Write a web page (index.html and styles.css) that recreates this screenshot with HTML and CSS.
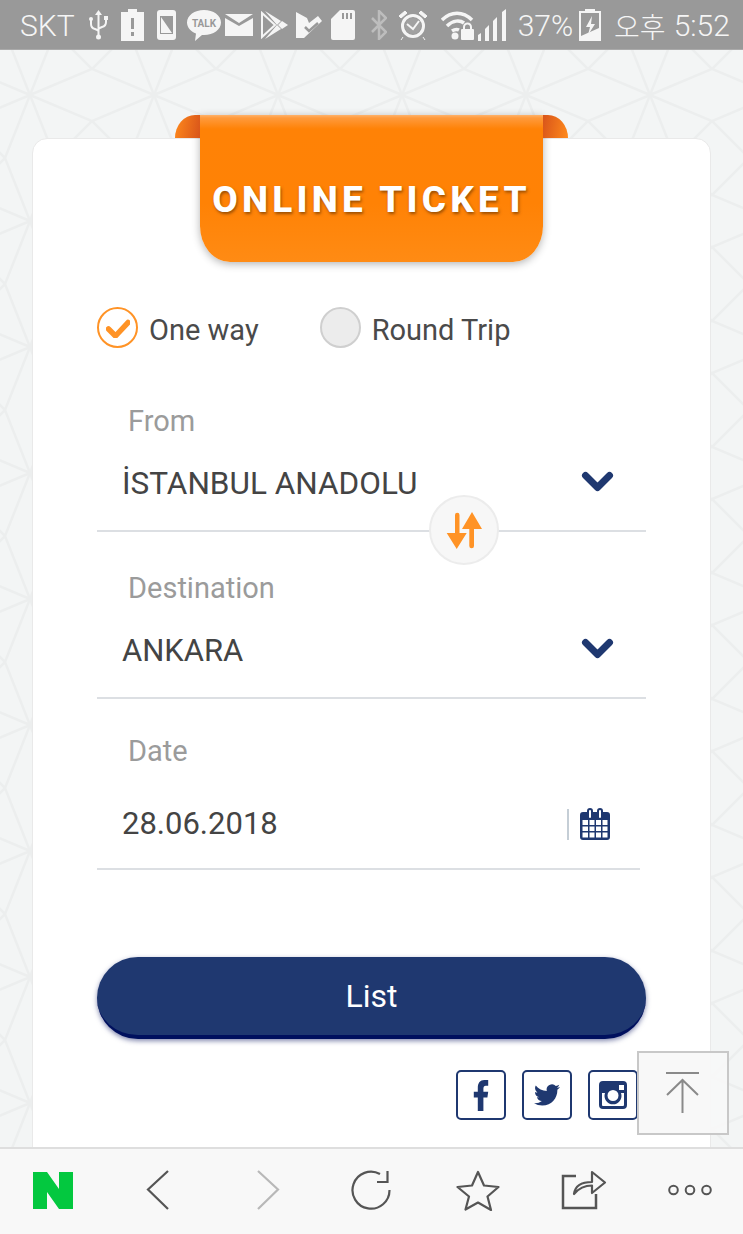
FILE: index.html
```html
<!DOCTYPE html>
<html lang="en">
<head>
<meta charset="utf-8">
<title>Online Ticket</title>
<link rel="stylesheet" href="styles.css">
</head>
<body>
<header class="status">
  <span class="st-text st-carrier">SKT</span>
  <svg class="m14" width="19" height="30" viewBox="0 0 19 30"><g fill="none" stroke="#f5f5f5" stroke-width="2"><path d="M9.5 3v24"/><path d="M2 10v4q0 4 4 5l3.500 1.500M17 9v3q0 4-4 5l-3.500 1.500"/></g><g fill="#f5f5f5"><path d="M9.500 0l3.500 5H6z"/><circle cx="2" cy="9" r="2"/><rect x="15" y="6" width="4" height="4"/><circle cx="9.500" cy="27" r="2.500"/></g></svg>
  <svg class="m13" width="23" height="32" viewBox="0 0 23 32"><path fill="#f5f5f5" fill-rule="evenodd" d="M7 0h9v3h7v29H0V3h7zM10 9v11h3V9zM10 23v4h3v-4z"/></svg>
  <svg class="m12" width="21" height="32" viewBox="0 0 21 32"><rect x="1" y="1" width="19" height="30" rx="3" fill="#f5f5f5"/><path d="M4 7h13v18H4z" fill="#999"/><path d="M5 8l11 16H5z" fill="#f5f5f5"/></svg>
  <svg class="m10" width="34" height="31" viewBox="0 0 34 31"><path fill="#f5f5f5" d="M17 0c9.400 0 17 5.400 17 12.500S26.400 25 17 25h-2l-7 6 1-7.500C4 21.500 0 17.500 0 12.500 0 5.400 7.600 0 17 0z"/><text x="17" y="16.500" class="talk" text-anchor="middle">TALK</text></svg>
  <svg class="m4" width="28" height="22" viewBox="0 0 28 22"><path fill="#f5f5f5" d="M0 0h28L14 9zM0 4l14 8 14-8v18H0z"/></svg>
  <svg class="m8" width="27" height="28" viewBox="0 0 27 28"><path fill="none" stroke="#f5f5f5" stroke-width="2" d="M1 2l13 12L1 26z"/><path fill="#f5f5f5" d="M4 0l16 10-4 4zM4 28l16-10-4-4zM21 10l6 4-6 4-4-4z"/></svg>
  <svg class="m8" width="26" height="26" viewBox="0 0 26 26"><path fill="#f5f5f5" d="M0 0l11 6 2 5 9-7 4 5L8 26H0z"/><path fill="none" stroke="#999" stroke-width="2.500" d="M9 15l4 4 9-8"/></svg>
  <svg class="m9" width="24" height="30" viewBox="0 0 24 30"><path fill="#f5f5f5" d="M9 0h13a2 2 0 0 1 2 2v26a2 2 0 0 1-2 2H2a2 2 0 0 1-2-2V9z"/><path fill="#999" d="M11 3h2v6h-2zM15 3h2v6h-2zM19 3h2v6h-2z"/></svg>
  <svg class="m16" width="16" height="30" viewBox="0 0 16 30"><path fill="none" stroke="#bdbdbd" stroke-width="2.500" d="M1 8l14 14-7 7V1l7 7L1 22"/></svg>
  <svg class="m11" width="30" height="31" viewBox="0 0 30 31"><circle cx="15" cy="16" r="10.500" fill="none" stroke="#f5f5f5" stroke-width="3"/><circle cx="15" cy="16" r="8" fill="#bdbdbd" opacity=".25"/><path d="M9 14l6 5 6-8" fill="none" stroke="#f5f5f5" stroke-width="2"/><path d="M1 6l6-5 2 2-6 5zM29 6l-6-5-2 2 6 5zM5 27l-2 3M25 27l2 3" fill="#f5f5f5" stroke="#f5f5f5"/></svg>
  <svg class="m13" width="33" height="29" viewBox="0 0 33 29"><g fill="none" stroke="#f5f5f5" stroke-width="3.500"><path d="M1 9c9-9 21-9 30 0"/><path d="M6 15c6-6 13-6 17-3"/><path d="M11 20c3-2 5-2 7-1"/></g><circle cx="14" cy="25" r="3.500" fill="#f5f5f5"/><rect x="20" y="18" width="13" height="11" rx="1" fill="#f5f5f5"/><path d="M23 19v-3a3.500 3.500 0 0 1 7 0v3" fill="none" stroke="#f5f5f5" stroke-width="2"/></svg>
  <svg class="m4" width="28" height="32" viewBox="0 0 28 32"><path fill="#f5f5f5" d="M0 32v-6l3-2v8zM7 32V20l4-4v16zM15 32V12l4-4v24zM24 32V3l4-3v32z"/></svg>
  <span class="st-text m12">37%</span>
  <svg class="m6" width="22" height="32" viewBox="0 0 22 32"><path fill="#f5f5f5" d="M6 0h10v2h6v30H0V2h6z"/><path fill="#999" d="M2 4h18v15l-18 8z"/><path fill="#f5f5f5" d="M13 7l-6 11h4l-2 8 7-11h-4z"/></svg>
  <span class="st-text st-ko m13">오후</span>
  <span class="st-text m8">5:52</span>
</header>

<main class="page">
  <svg class="pattern" width="743" height="1100" aria-hidden="true">
    <defs>
      <pattern id="web" width="124" height="126" patternUnits="userSpaceOnUse" patternTransform="translate(-32 -18)">
        <path d="M0 37L62 63L124 89M0 89L62 63L124 37M37 0L62 63L87 126M87 0L62 63L37 126M37 0L0 37M87 0L124 37M37 126L0 89M87 126L124 89" fill="none" stroke="#eceeee" stroke-width="2.500"/>
      </pattern>
    </defs>
    <rect width="743" height="1100" fill="url(#web)"/>
  </svg>

  <section class="card">
    <div class="ribbon">
      <h1 class="ribbon-title">ONLINE TICKET</h1>
    </div>

    <div class="trip">
      <div class="trip-opt">
        <span class="radio radio-on">
          <svg width="24" height="20" viewBox="0 0 24 20"><path d="M2.500 11l7 7L22 4.500" fill="none" stroke="#ff9326" stroke-width="5.500" stroke-linecap="round" stroke-linejoin="round"/></svg>
        </span>
        <span class="trip-label">One way</span>
      </div>
      <div class="trip-opt">
        <span class="radio"></span>
        <span class="trip-label">Round Trip</span>
      </div>
    </div>

    <div class="field field-from">
      <div class="field-label">From</div>
      <div class="field-row">
        <span class="field-value">İSTANBUL ANADOLU</span>
        <svg class="chev" width="33" height="21" viewBox="0 0 33 21"><path d="M4.500 4.500l12 12 12-12" fill="none" stroke="#1f3870" stroke-width="7" stroke-linecap="round" stroke-linejoin="round"/></svg>
      </div>
      <button class="swap" type="button" aria-label="Swap">
        <svg width="37" height="39" viewBox="0 0 37 39"><g fill="#ff9326"><path d="M9 4a2.250 2.250 0 0 1 4.500 0v18h7.200l-10 16-10-16H9z"/><path d="M16 18L26 1l10 17h-8v17a2.350 2.350 0 0 1-4.700 0V18z"/></g></svg>
      </button>
    </div>

    <div class="field field-dest">
      <div class="field-label">Destination</div>
      <div class="field-row">
        <span class="field-value">ANKARA</span>
        <svg class="chev" width="33" height="21" viewBox="0 0 33 21"><path d="M4.500 4.500l12 12 12-12" fill="none" stroke="#1f3870" stroke-width="7" stroke-linecap="round" stroke-linejoin="round"/></svg>
      </div>
    </div>

    <div class="field field-date">
      <div class="field-label">Date</div>
      <div class="field-row field-row-date">
        <span class="field-value">28.06.2018</span>
        <span class="date-icon">
          <span class="date-sep"></span>
          <svg width="30" height="32" viewBox="0 0 30 32"><path fill="#1f3870" fill-rule="evenodd" d="M3 4h4V3a3 3 0 0 1 6 0v1h4V3a3 3 0 0 1 6 0v1h4a3 3 0 0 1 3 3v22a3 3 0 0 1-3 3H3a3 3 0 0 1-3-3V7a3 3 0 0 1 3-3zM9 3v6a1 1 0 0 0 2 0V3a1 1 0 0 0-2 0zM19 3v6a1 1 0 0 0 2 0V3a1 1 0 0 0-2 0zM2.500 12v5h5.500v-5zM9.500 12v5h5v-5zM16 12v5h5v-5zM22.500 12v5h5v-5zM2.500 18.500v4.500h5.500v-4.500zM9.500 18.500v4.500h5v-4.500zM16 18.500v4.500h5v-4.500zM22.500 18.500v4.500h5v-4.500zM2.500 24.500v5h5.500v-5zM9.500 24.500v5h5v-5zM16 24.500v5h5v-5zM22.500 24.500v5h5v-5z"/></svg>
        </span>
      </div>
    </div>

    <button class="list-btn" type="button">List</button>

    <div class="social">
      <a class="social-link">
        <svg width="16" height="31" viewBox="0 0 20 32" preserveAspectRatio="none"><path fill="#1f3870" d="M6 32V18H1v-6h5V8c0-5 3-8 8-8h5v6h-3c-2 0-3 1-3 3v3h6l-1 6h-5v14z"/></svg>
      </a>
      <a class="social-link">
        <svg width="28" height="26" viewBox="0 0 24 24"><path fill="#1f3870" d="M23.953 4.570a10 10 0 0 1-2.825.775 4.958 4.958 0 0 0 2.163-2.723c-.951.555-2.005.959-3.127 1.184a4.920 4.920 0 0 0-8.384 4.482C7.690 8.095 4.067 6.130 1.640 3.162a4.822 4.822 0 0 0-.666 2.475c0 1.710.870 3.213 2.188 4.096a4.904 4.904 0 0 1-2.228-.616v.060a4.923 4.923 0 0 0 3.946 4.827 4.996 4.996 0 0 1-2.212.085 4.936 4.936 0 0 0 4.604 3.417 9.867 9.867 0 0 1-6.102 2.105c-.390 0-.779-.023-1.170-.067a13.995 13.995 0 0 0 7.557 2.209c9.053 0 13.998-7.496 13.998-13.985 0-.210 0-.420-.015-.630A9.935 9.935 0 0 0 24 4.590z"/></svg>
      </a>
      <a class="social-link">
        <svg width="28" height="28" viewBox="0 0 28 28"><path fill="#1f3870" fill-rule="evenodd" d="M4 0h20a4 4 0 0 1 4 4v20a4 4 0 0 1-4 4H4a4 4 0 0 1-4-4V4a4 4 0 0 1 4-4zM20 4v5h5V4zM3 12v12a1 1 0 0 0 1 1h20a1 1 0 0 0 1-1V12h-3a8.500 8.500 0 1 1-16 0zM14 9a5.500 5.500 0 1 0 0 11 5.500 5.500 0 0 0 0-11z"/></svg>
      </a>
    </div>
  </section>
</main>

<a class="to-top" aria-label="Back to top">
  <svg width="36" height="44" viewBox="0 0 36 44"><path d="M1 2h33M17.500 9v33M2 24L17.500 9 33 24" fill="none" stroke="#8a8a8a" stroke-width="2"/></svg>
</a>

<nav class="toolbar">
  <span class="tool">
    <svg width="40" height="37" viewBox="0 0 40 37"><path fill="#03c83f" d="M0 0h14l12 17V0h14v37H26L14 20v17H0z"/></svg>
  </span>
  <span class="tool tool-back">
    <svg width="24" height="40" viewBox="0 0 24 40"><path d="M22 1L2 19.500 22 39" fill="none" stroke="#555" stroke-width="2.200"/></svg>
  </span>
  <span class="tool tool-fwd">
    <svg width="24" height="40" viewBox="0 0 24 40"><path d="M2 1l20 18.500L2 39" fill="none" stroke="#b8b8b8" stroke-width="2.200"/></svg>
  </span>
  <span class="tool">
    <svg width="42" height="42" viewBox="0 0 42 42"><path d="M39.500 21A18.500 18.500 0 1 1 30 5" fill="none" stroke="#555" stroke-width="2.200"/><path d="M37.500 2v11H27" fill="none" stroke="#555" stroke-width="2.200"/></svg>
  </span>
  <span class="tool">
    <svg width="44" height="42" viewBox="0 0 44 42"><path d="M22 3l6 13.500 14.500 1.500-11 9.500 3.500 13.500L22 33.500 9.500 40.500 13 27.500 1.500 18 16 16.500z" fill="none" stroke="#555" stroke-width="2.200" stroke-linejoin="round"/></svg>
  </span>
  <span class="tool">
    <svg width="46" height="40" viewBox="0 0 46 40"><path d="M15 6H2v32h33V24" fill="none" stroke="#555" stroke-width="2.500"/><path d="M13 24c1-8 7-12 18-12V2l13 10.500L31 23V15.500c-8 0-13 2.500-18 8.500z" fill="none" stroke="#555" stroke-width="2.200" stroke-linejoin="round"/></svg>
  </span>
  <span class="tool">
    <svg width="44" height="12" viewBox="0 0 44 12"><g fill="none" stroke="#555" stroke-width="2"><circle cx="5.500" cy="6" r="4.300"/><circle cx="22" cy="6" r="4.300"/><circle cx="38.500" cy="6" r="4.300"/></g></svg>
  </span>
</nav>
</body>
</html>
```
FILE: styles.css
```css
* { box-sizing: border-box; }

html, body {
  margin: 0;
  padding: 0;
}

body {
  width: 743px;
  height: 1234px;
  overflow: hidden;
  display: flex;
  flex-direction: column;
  position: relative;
  font-family: Roboto, "Noto Sans CJK KR", sans-serif;
  background: #f3f5f5;
}

/* status bar */
.status {
  flex: 0 0 50px;
  display: flex;
  align-items: center;
  padding: 1px 0 0 20px;
  background: #999;
  border-bottom: 1px solid #aaa;
  color: #f5f5f5;
}

.st-text {
  font-size: 30px;
  line-height: 46px;
  padding-top: 2px;
  font-weight: 300;
  white-space: nowrap;
}

.st-ko {
  font-family: "Noto Sans CJK KR", sans-serif;
  font-size: 28px;
  font-weight: 300;
}

.talk {
  font: 700 10px Roboto, sans-serif;
  fill: #999;
}

.m4 { margin-left: 4px; }
.m6 { margin-left: 6px; }
.m8 { margin-left: 8px; }
.m9 { margin-left: 9px; }
.m10 { margin-left: 10px; }
.m11 { margin-left: 11px; }
.m12 { margin-left: 12px; }
.m13 { margin-left: 13px; }
.m14 { margin-left: 14px; }
.m16 { margin-left: 16px; }

/* page */
.page {
  flex: 1 1 auto;
  min-height: 0;
  position: relative;
  overflow: hidden;
  padding: 88px 32px 0 32px;
}

.pattern {
  position: absolute;
  left: 0;
  top: 0;
  filter: blur(.7px);
}

.card {
  position: relative;
  width: 679px;
  height: 1040px;
  padding: 0 64px;
  background: #fff;
  border: 1px solid #e9e9e9;
  border-radius: 15px;
}

/* ribbon */
.ribbon {
  position: relative;
  width: 343px;
  height: 147px;
  margin: -24px auto 0;
  display: flex;
  align-items: center;
  justify-content: center;
  padding-top: 23px;
  border-radius: 0 0 30px 30px / 0 0 36px 36px;
  background: linear-gradient(#ffb26a 0, #ff9a3c 3px, #ff8206 14px, #ff8205 60%, #ff8b14 100%);
  box-shadow: 0 2px 8px rgba(0, 0, 0, .3);
}

.ribbon::before,
.ribbon::after {
  content: "";
  position: absolute;
  top: 0;
  width: 25px;
  height: 23px;
}

.ribbon::before {
  left: -25px;
  border-radius: 20px 0 0 0 / 23px 0 0 0;
  background: linear-gradient(100deg, #ff8a1c, #d8541a);
}

.ribbon::after {
  right: -25px;
  border-radius: 0 20px 0 0 / 0 23px 0 0;
  background: linear-gradient(100deg, #d8541a, #ff8a1c);
}

.ribbon-title {
  margin: 0;
  font-size: 37px;
  line-height: 42px;
  font-weight: 800;
  letter-spacing: 4.2px;
  color: #fff;
  white-space: nowrap;
  text-shadow: 1px 2px 3px rgba(90, 45, 0, .6);
}

/* trip type */
.trip {
  display: flex;
  gap: 61px;
  margin-top: 45px;
}

.trip-opt {
  display: flex;
  align-items: center;
  gap: 11px;
  height: 41px;
}

.radio {
  width: 41px;
  height: 41px;
  display: flex;
  align-items: center;
  justify-content: center;
  border-radius: 50%;
  background: #ececec;
  border: 2px solid #cfcfcf;
}

.radio-on {
  background: #fff;
  border-color: #ff9326;
}

.trip-label {
  font-size: 29px;
  line-height: 41px;
  padding-top: 5px;
  color: #4a4a4a;
}

/* fields */
.field {
  position: relative;
  border-bottom: 2px solid #dcdfe3;
}

.field-from {
  margin-top: 57px;
  height: 127px;
}

.field-dest {
  margin-top: 40px;
  height: 127px;
}

.field-date {
  margin-top: 36px;
  width: 543px;
  height: 135px;
}

.field-label {
  padding-left: 31px;
  font-size: 29px;
  line-height: 32px;
  color: #9b9b9b;
}

.field-row {
  display: flex;
  align-items: center;
  justify-content: space-between;
  height: 62px;
  padding: 0 32px 0 25px;
  margin-top: 16px;
}

.field-row-date {
  margin-top: 26px;
  padding-right: 30px;
}

.field-value {
  font-size: 31px;
  line-height: 62px;
  color: #444;
}

.field-from .field-value {
  font-size: 31.5px;
}

.chev {
  margin-top: -6px;
}

.date-icon {
  display: flex;
  align-items: center;
  gap: 11px;
}

.date-sep {
  width: 2px;
  height: 31px;
  background: #c5ced6;
}

.swap {
  position: absolute;
  left: 332px;
  top: 90px;
  width: 70px;
  height: 70px;
  padding: 0;
  display: flex;
  align-items: center;
  justify-content: center;
  border-radius: 50%;
  border: 2px solid #ececec;
  background: #f7f7f7;
}

/* list button */
.list-btn {
  display: block;
  width: 549px;
  height: 82px;
  margin-top: 87px;
  padding: 0;
  border: 0;
  border-bottom: 4px solid #00105e;
  border-radius: 41px;
  background: #1f3870;
  box-shadow: 0 2px 5px rgba(30, 40, 110, .55);
  font-family: Roboto, sans-serif;
  font-size: 32px;
  color: #fff;
}

/* social */
.social {
  display: flex;
  justify-content: flex-end;
  gap: 16px;
  margin-top: 31px;
  width: 541px;
}

.social-link {
  width: 50px;
  height: 50px;
  display: flex;
  align-items: center;
  justify-content: center;
  border: 2px solid #1f3870;
  border-radius: 5px;
}

/* scroll-to-top */
.to-top {
  position: absolute;
  left: 637px;
  top: 1051px;
  width: 92px;
  height: 84px;
  display: flex;
  align-items: center;
  justify-content: center;
  background: rgba(247, 247, 247, .92);
  border: 2px solid #c8c8c8;
}

/* bottom toolbar */
.toolbar {
  flex: 0 0 87px;
  display: grid;
  grid-template-columns: repeat(7, 1fr);
  align-items: center;
  justify-items: center;
  padding-bottom: 3px;
  background: #f8f8f8;
  border-top: 2px solid #dedede;
}

.tool {
  display: flex;
  align-items: center;
  justify-content: center;
}

.tool-back {
  padding-right: 2px;
}

.tool-fwd {
  padding-left: 6px;
}
```
